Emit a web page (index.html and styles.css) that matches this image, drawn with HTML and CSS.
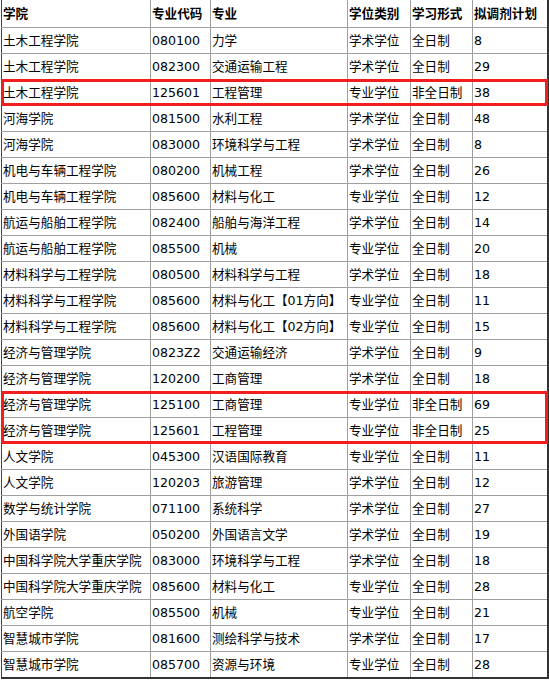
FILE: index.html
```html
<!DOCTYPE html>
<html lang="zh">
<head>
<meta charset="utf-8">
<title>拟调剂计划</title>
<link rel="stylesheet" href="styles.css">
</head>
<body>
<div class="wrap">
<table class="plan">
<colgroup>
<col class="c1"><col class="c2"><col class="c3"><col class="c4"><col class="c5"><col class="c6">
</colgroup>
<thead>
<tr><th>学院</th><th>专业代码</th><th>专业</th><th>学位类别</th><th>学习形式</th><th>拟调剂计划</th></tr>
</thead>
<tbody>
<tr><td>土木工程学院</td><td>080100</td><td>力学</td><td>学术学位</td><td>全日制</td><td>8</td></tr>
<tr><td>土木工程学院</td><td>082300</td><td>交通运输工程</td><td>学术学位</td><td>全日制</td><td>29</td></tr>
<tr><td>土木工程学院</td><td>125601</td><td>工程管理</td><td>专业学位</td><td>非全日制</td><td>38</td></tr>
<tr><td>河海学院</td><td>081500</td><td>水利工程</td><td>学术学位</td><td>全日制</td><td>48</td></tr>
<tr><td>河海学院</td><td>083000</td><td>环境科学与工程</td><td>学术学位</td><td>全日制</td><td>8</td></tr>
<tr><td>机电与车辆工程学院</td><td>080200</td><td>机械工程</td><td>学术学位</td><td>全日制</td><td>26</td></tr>
<tr><td>机电与车辆工程学院</td><td>085600</td><td>材料与化工</td><td>专业学位</td><td>全日制</td><td>12</td></tr>
<tr><td>航运与船舶工程学院</td><td>082400</td><td>船舶与海洋工程</td><td>学术学位</td><td>全日制</td><td>14</td></tr>
<tr><td>航运与船舶工程学院</td><td>085500</td><td>机械</td><td>专业学位</td><td>全日制</td><td>20</td></tr>
<tr><td>材料科学与工程学院</td><td>080500</td><td>材料科学与工程</td><td>学术学位</td><td>全日制</td><td>18</td></tr>
<tr><td>材料科学与工程学院</td><td>085600</td><td>材料与化工【01方向】</td><td>专业学位</td><td>全日制</td><td>11</td></tr>
<tr><td>材料科学与工程学院</td><td>085600</td><td>材料与化工【02方向】</td><td>专业学位</td><td>全日制</td><td>15</td></tr>
<tr><td>经济与管理学院</td><td>0823Z2</td><td>交通运输经济</td><td>学术学位</td><td>全日制</td><td>9</td></tr>
<tr><td>经济与管理学院</td><td>120200</td><td>工商管理</td><td>学术学位</td><td>全日制</td><td>18</td></tr>
<tr><td>经济与管理学院</td><td>125100</td><td>工商管理</td><td>专业学位</td><td>非全日制</td><td>69</td></tr>
<tr><td>经济与管理学院</td><td>125601</td><td>工程管理</td><td>专业学位</td><td>非全日制</td><td>25</td></tr>
<tr><td>人文学院</td><td>045300</td><td>汉语国际教育</td><td>专业学位</td><td>全日制</td><td>11</td></tr>
<tr><td>人文学院</td><td>120203</td><td>旅游管理</td><td>学术学位</td><td>全日制</td><td>12</td></tr>
<tr><td>数学与统计学院</td><td>071100</td><td>系统科学</td><td>学术学位</td><td>全日制</td><td>27</td></tr>
<tr><td>外国语学院</td><td>050200</td><td>外国语言文学</td><td>学术学位</td><td>全日制</td><td>19</td></tr>
<tr><td>中国科学院大学重庆学院</td><td>083000</td><td>环境科学与工程</td><td>学术学位</td><td>全日制</td><td>18</td></tr>
<tr><td>中国科学院大学重庆学院</td><td>085600</td><td>材料与化工</td><td>专业学位</td><td>全日制</td><td>28</td></tr>
<tr><td>航空学院</td><td>085500</td><td>机械</td><td>专业学位</td><td>全日制</td><td>21</td></tr>
<tr><td>智慧城市学院</td><td>081600</td><td>测绘科学与技术</td><td>学术学位</td><td>全日制</td><td>17</td></tr>
<tr><td>智慧城市学院</td><td>085700</td><td>资源与环境</td><td>专业学位</td><td>全日制</td><td>28</td></tr>
</tbody>
</table>
<div class="mark" style="top:79px;height:27px"></div>
<div class="mark" style="top:391px;height:53px"></div>
</div>
</body>
</html>
```
FILE: styles.css
```css
html, body {
  margin: 0;
  padding: 0;
  background: #fff;
}

.wrap {
  position: relative;
  width: 549px;
}

.plan {
  border-collapse: collapse;
  table-layout: fixed;
  width: 547px;
  margin: 0 0 0 1px;
  font-family: "DejaVu Sans", "Noto Sans CJK SC", sans-serif;
  font-size: 12.6px;
  color: #000;
  border-top: 1px solid #fff;
  border-left: 1px solid #444;
  border-right: 2px solid #333;
  border-bottom: 2px solid #333;
}

.c1 { width: 149px; }
.c2 { width: 60px; }
.c3 { width: 137px; }
.c4 { width: 63px; }
.c5 { width: 62px; }
.c6 { width: 75px; }

.plan th,
.plan td {
  border: 1px solid #a0a0a0;
  padding: 0 1px;
  height: 25px;
  text-align: left;
  vertical-align: middle;
  white-space: nowrap;
  overflow: hidden;
  line-height: 16px;
}

.plan th {
  font-weight: bold;
  height: 26px;
  border-top: 0;
}

.plan td:first-child,
.plan th:first-child {
  border-left: 1px solid #444;
}

.plan td:last-child,
.plan th:last-child {
  border-right: 2px solid #333;
}

.plan tbody tr:last-child td {
  border-bottom: 2px solid #333;
}

.mark {
  position: absolute;
  left: 1px;
  width: 547px;
  border: 3px solid #f21d1d;
  box-sizing: border-box;
  pointer-events: none;
}
```
